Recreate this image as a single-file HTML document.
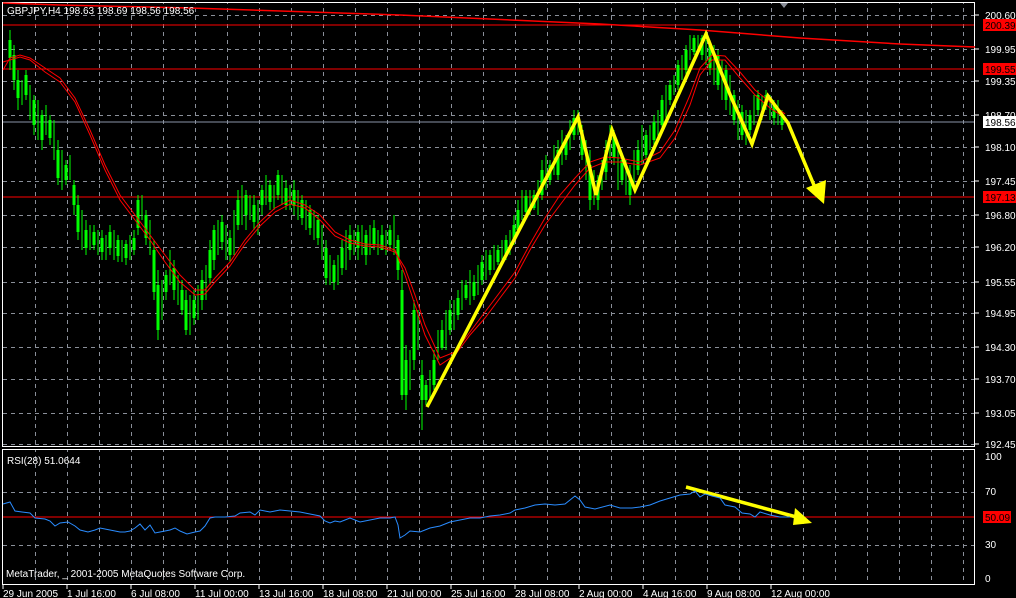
<!DOCTYPE html>
<html><head><meta charset="utf-8"><style>
html,body{margin:0;padding:0;background:#000;width:1016px;height:598px;overflow:hidden}
svg{display:block}
text{font-family:"Liberation Sans",sans-serif;font-size:10px;fill:#fff}
</style></head><body>
<svg width="1016" height="598" viewBox="0 0 1016 598" xmlns="http://www.w3.org/2000/svg">
<rect width="1016" height="598" fill="#000"/>
<defs>
<pattern id="vg" x="35" y="0" width="32" height="8" patternUnits="userSpaceOnUse">
<rect x="0" y="0" width="1" height="4" fill="#8a8f99"/>
</pattern>
<pattern id="hg" x="3" y="0" width="8" height="1000" patternUnits="userSpaceOnUse">
<rect x="0" y="0" width="4" height="1000" fill="#8a8f99"/>
</pattern>
</defs>
<rect x="34" y="3" width="940" height="442" fill="url(#vg)"/>
<rect x="34" y="450" width="940" height="134" fill="url(#vg)"/>
<g fill="url(#hg)">
<rect x="3" y="15" width="971" height="1"/><rect x="3" y="49" width="971" height="1"/>
<rect x="3" y="81" width="971" height="1"/><rect x="3" y="115" width="971" height="1"/>
<rect x="3" y="147" width="971" height="1"/><rect x="3" y="181" width="971" height="1"/>
<rect x="3" y="215" width="971" height="1"/><rect x="3" y="247" width="971" height="1"/>
<rect x="3" y="282" width="971" height="1"/><rect x="3" y="313" width="971" height="1"/>
<rect x="3" y="347" width="971" height="1"/><rect x="3" y="379" width="971" height="1"/>
<rect x="3" y="413" width="971" height="1"/><rect x="3" y="444" width="971" height="1"/>
<rect x="3" y="492" width="971" height="1"/><rect x="3" y="545" width="971" height="1"/>
</g>
<rect x="2.5" y="2.5" width="972" height="444" fill="none" stroke="#fff"/>
<rect x="2.5" y="449.5" width="972" height="135" fill="none" stroke="#fff"/>
<line x1="3" y1="25" x2="974" y2="25" stroke="#f00"/>
<line x1="3" y1="69" x2="974" y2="69" stroke="#f00"/>
<line x1="3" y1="197" x2="974" y2="197" stroke="#f00"/>
<line x1="3" y1="122" x2="974" y2="122" stroke="#8a94a8"/>
<line x1="3" y1="517" x2="974" y2="517" stroke="#f00"/>
<polyline points="3,3 60,5 190,8 400,15 600,24 700,30 800,38 900,44 975,47" fill="none" stroke="#f00" stroke-width="1.5"/>
<!-- candles: wicks -->
<path stroke="#00ff00" stroke-width="1" fill="none" d="M10,30V70 M14,45V90 M18,70V110 M22,80V105 M26,70V100 M30,85V120 M34,95V135 M38,100V140 M42,110V150 M46,105V135 M50,115V145 M54,120V160 M58,140V185 M62,150V190 M66,160V185 M70,155V180 M74,180V215 M78,195V240 M82,210V250 M86,220V255 M90,225V250 M94,225V250 M98,230V255 M102,230V260 M106,235V260 M110,225V255 M114,230V260 M118,235V262 M122,240V262 M126,240V265 M130,235V260 M134,230V255 M138,195V235 M142,195V220 M146,210V245 M150,220V255 M154,240V300 M158,270V340 M162,280V320 M166,270V300 M170,250V285 M174,260V300 M178,275V305 M182,280V315 M186,290V335 M190,295V335 M194,290V325 M198,285V320 M202,270V310 M206,265V300 M210,240V285 M214,225V270 M218,220V255 M222,215V250 M226,225V260 M230,230V262 M234,210V255 M238,190V230 M242,185V225 M246,190V230 M250,195V220 M254,195V230 M258,200V235 M262,185V215 M266,175V205 M270,180V210 M274,185V210 M278,170V200 M282,175V205 M286,180V210 M290,185V210 M294,180V215 M298,190V220 M302,195V225 M306,200V230 M310,205V235 M314,210V240 M318,215V245 M322,225V260 M326,240V285 M330,255V285 M334,260V290 M338,255V285 M342,240V275 M346,230V270 M350,225V260 M354,230V255 M358,225V260 M362,225V255 M366,230V265 M370,225V255 M374,220V250 M378,230V255 M382,225V250 M386,230V255 M390,225V250 M394,215V255 M398,235V280 M402,270V400 M406,345V410 M410,350V390 M414,300V370 M418,310V350 M422,360V430 M426,380V405 M430,370V400 M434,350V390 M438,330V360 M442,320V350 M446,310V350 M450,300V335 M454,300V330 M458,290V320 M462,280V310 M466,280V300 M470,270V305 M474,275V300 M478,265V295 M482,255V285 M486,250V280 M490,250V275 M494,245V270 M498,245V265 M502,240V265 M506,235V260 M510,230V255 M514,215V245 M518,200V235 M522,190V220 M526,190V215 M530,190V215 M534,190V210 M538,180V215 M542,160V200 M546,155V190 M550,160V185 M554,145V175 M558,140V180 M562,130V165 M566,135V160 M570,120V150 M574,110V140 M578,110V135 M582,125V160 M586,140V180 M590,150V210 M594,170V205 M598,175V210 M602,160V190 M606,140V180 M610,125V160 M614,130V165 M618,150V190 M622,155V185 M626,160V195 M630,165V205 M634,150V185 M638,140V175 M642,125V165 M646,130V160 M650,125V150 M654,115V145 M658,110V140 M662,95V130 M666,85V120 M670,80V105 M674,75V95 M678,60V90 M682,55V80 M686,45V75 M690,35V60 M694,35V55 M698,35V50 M702,35V60 M706,40V65 M710,40V75 M714,45V85 M718,50V90 M722,60V100 M726,65V110 M730,75V115 M734,90V125 M738,100V140 M742,105V140 M746,110V145 M750,110V135 M754,95V125 M758,90V115 M762,95V120 M766,90V110 M770,95V120 M774,100V125 M778,100V125 M782,110V130"/>
<!-- candles: bodies -->
<path stroke="#00ff00" stroke-width="3" fill="none" d="M10,40V58 M14,55V80 M18,80V98 M26,75V95 M34,100V125 M42,115V140 M50,120V138 M58,150V178 M66,165V180 M74,185V205 M78,205V232 M86,230V248 M94,232V245 M102,238V252 M110,232V248 M118,240V256 M126,244V258 M134,238V250 M138,200V228 M146,215V238 M154,250V292 M158,285V330 M166,275V292 M174,268V290 M182,290V310 M186,300V330 M194,300V318 M202,280V300 M210,250V278 M214,230V260 M222,222V242 M230,238V255 M238,200V225 M246,195V215 M254,205V222 M262,190V205 M270,185V202 M278,175V195 M286,188V205 M294,190V206 M302,200V218 M310,210V228 M318,220V238 M326,248V278 M334,265V282 M342,248V268 M350,235V250 M358,232V248 M366,235V255 M374,228V244 M382,235V250 M390,230V245 M398,240V270 M402,290V395 M406,360V395 M414,310V360 M422,375V400 M426,385V400 M434,360V385 M442,330V348 M450,310V330 M458,298V315 M466,285V298 M474,282V296 M482,262V280 M490,255V270 M498,250V262 M506,240V255 M514,225V240 M518,210V230 M526,196V212 M534,195V208 M542,170V195 M550,165V180 M558,150V175 M566,140V155 M574,118V135 M582,130V155 M590,165V200 M598,180V200 M606,150V172 M614,135V158 M622,160V180 M630,175V195 M638,150V170 M646,135V155 M654,122V140 M662,100V125 M670,85V100 M678,65V85 M686,50V70 M694,38V52 M702,38V55 M710,45V68 M718,55V85 M726,70V100 M734,95V120 M742,112V135 M750,115V130 M758,95V110 M766,95V105 M774,103V118 M782,115V125"/>
<!-- moving averages -->
<g stroke="#f00" fill="none" stroke-width="1">
<polyline points="3,70 10,58 20,55 30,58 45,68 60,78 75,98 90,130 105,165 120,195 135,215 150,235 165,255 180,275 195,290 205,290 215,278 230,262 245,240 260,222 275,208 290,200 305,205 320,215 335,232 350,240 365,244 380,245 395,250 405,275 415,305 425,335 440,365 455,355 470,335 485,318 500,298 515,278 530,250 545,225 560,205 575,185 590,168 605,162 620,162 640,165 660,158 675,138 690,105 700,75 712,60 725,60 740,78 755,95 770,108 785,118"/>
<polyline points="3,62 10,60 20,57 30,60 45,72 60,82 75,102 90,135 105,170 120,200 135,220 150,240 165,262 180,282 195,295 205,294 215,282 230,266 245,244 260,226 275,212 290,204 305,208 320,220 335,236 350,243 365,246 380,247 395,252 405,268 415,295 425,325 440,358 455,352 470,332 485,312 500,292 515,272 530,244 545,218 560,195 575,178 590,162 605,157 620,158 640,162 660,152 675,130 690,95 700,68 712,55 725,56 740,72 755,90 770,102 785,114"/>
</g>
<!-- yellow annotation -->
<polyline points="427,407 578,117 596,195 612,130 635,190 706,34 731,97 752,144 768,96 788,123 816,190" fill="none" stroke="#ffff00" stroke-width="3.5"/>
<polygon points="806,188 824,204 826,180" fill="#ffff00"/>
<line x1="686" y1="487" x2="800" y2="518" stroke="#ffff00" stroke-width="3.5"/>
<polygon points="795,508 812,523 793,525" fill="#ffff00"/>
<!-- RSI -->
<polyline fill="none" stroke="#2a8cff" stroke-width="1" points="3,504 10,502 15,511 22,512 30,513 35,518 45,519 50,521 55,526 60,523 68,522 75,526 80,530 88,532 95,530 100,528 110,530 120,532 125,532 130,531 135,528 140,524 145,530 150,525 155,533 160,532 170,530 175,528 180,531 187,534 195,532 200,531 205,526 210,518 215,517 225,517 235,516 240,513 250,512 255,515 260,510 270,512 280,510 290,511 300,512 310,514 320,516 325,521 330,523 335,521 340,522 345,520 350,518 360,522 370,520 380,518 390,518 395,517 398,525 400,538 405,535 410,531 420,532 430,528 440,526 450,522 460,520 470,518 480,518 490,516 500,515 510,513 515,510 525,508 535,505 545,504 555,505 565,504 575,496 580,500 585,507 595,509 610,505 620,508 632,508 640,507 650,505 660,501 670,498 680,495 690,494 695,491 700,497 705,494 712,496 720,498 725,505 735,507 742,513 750,514 755,517 760,512 770,515 780,517 790,517"/>
<text x="7" y="14">GBPJPY,H4  198.63 198.69 198.56 198.56</text>
<text x="7" y="464">RSI(28) 51.0644</text>
<text x="6" y="577">MetaTrader, _ 2001-2005 MetaQuotes Software Corp.</text>
<g stroke="#fff"><line x1="975" y1="15" x2="979" y2="15"/><line x1="975" y1="49" x2="979" y2="49"/><line x1="975" y1="81" x2="979" y2="81"/><line x1="975" y1="115" x2="979" y2="115"/><line x1="975" y1="147" x2="979" y2="147"/><line x1="975" y1="181" x2="979" y2="181"/><line x1="975" y1="215" x2="979" y2="215"/><line x1="975" y1="247" x2="979" y2="247"/><line x1="975" y1="282" x2="979" y2="282"/><line x1="975" y1="313" x2="979" y2="313"/><line x1="975" y1="347" x2="979" y2="347"/><line x1="975" y1="379" x2="979" y2="379"/><line x1="975" y1="413" x2="979" y2="413"/><line x1="975" y1="444" x2="979" y2="444"/></g>
<g>
<text x="985" y="19">200.60</text>
<text x="985" y="53">199.95</text>
<text x="985" y="85">199.35</text>
<text x="985" y="119">198.70</text>
<text x="985" y="151">198.10</text>
<text x="985" y="185">197.45</text>
<text x="985" y="219">196.80</text>
<text x="985" y="251">196.20</text>
<text x="985" y="286">195.55</text>
<text x="985" y="317">194.95</text>
<text x="985" y="351">194.30</text>
<text x="985" y="383">193.70</text>
<text x="985" y="417">193.05</text>
<text x="985" y="448">192.45</text>
</g>
<rect x="983" y="19" width="33" height="12" fill="#f00"/><text x="985" y="29" style="fill:#000">200.39</text>
<rect x="983" y="63" width="33" height="12" fill="#f00"/><text x="985" y="73" style="fill:#000">199.55</text>
<rect x="983" y="116" width="33" height="12" fill="#fff"/><text x="985" y="126" style="fill:#000">198.56</text>
<rect x="983" y="191" width="33" height="12" fill="#f00"/><text x="985" y="201" style="fill:#000">197.13</text>
<text x="985" y="460">100</text>
<text x="985" y="495">70</text>
<rect x="983" y="511" width="28" height="12" fill="#f00"/><text x="985" y="521" style="fill:#000">50.09</text>
<text x="985" y="548">30</text>
<text x="985" y="582">0</text>
<g stroke="#fff"><line x1="3" y1="585" x2="3" y2="589"/><line x1="67" y1="585" x2="67" y2="589"/><line x1="131" y1="585" x2="131" y2="589"/><line x1="195" y1="585" x2="195" y2="589"/><line x1="259" y1="585" x2="259" y2="589"/><line x1="323" y1="585" x2="323" y2="589"/><line x1="387" y1="585" x2="387" y2="589"/><line x1="451" y1="585" x2="451" y2="589"/><line x1="515" y1="585" x2="515" y2="589"/><line x1="579" y1="585" x2="579" y2="589"/><line x1="643" y1="585" x2="643" y2="589"/><line x1="707" y1="585" x2="707" y2="589"/><line x1="771" y1="585" x2="771" y2="589"/></g>
<g>
<text x="3" y="597">29 Jun 2005</text>
<text x="67" y="597">1 Jul 16:00</text>
<text x="131" y="597">6 Jul 08:00</text>
<text x="195" y="597">11 Jul 00:00</text>
<text x="259" y="597">13 Jul 16:00</text>
<text x="323" y="597">18 Jul 08:00</text>
<text x="387" y="597">21 Jul 00:00</text>
<text x="451" y="597">25 Jul 16:00</text>
<text x="515" y="597">28 Jul 08:00</text>
<text x="579" y="597">2 Aug 00:00</text>
<text x="643" y="597">4 Aug 16:00</text>
<text x="707" y="597">9 Aug 08:00</text>
<text x="771" y="597">12 Aug 00:00</text>
</g>
<polygon points="780,3 788,3 784,8" fill="#8a8f99"/>
</svg>
</body></html>
